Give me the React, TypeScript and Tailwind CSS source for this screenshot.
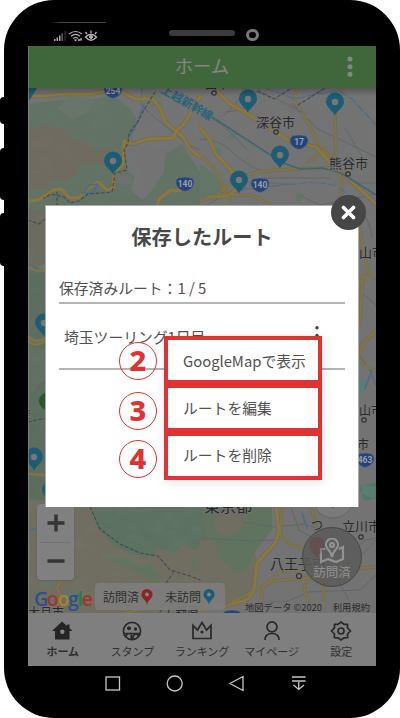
import React from "react";

const jp = "font-['Noto_Sans_CJK_JP',sans-serif]";

function Pin({ x, y }: { x: number; y: number }) {
  return (
    <g transform={`translate(${x} ${y})`}>
      <path d="M0 0C-1-5-9-8-9-14.500A9 9 0 0 1 9-14.500C9-8 1-5 0 0Z" fill="#1d5c72" />
      <circle cx="0" cy="-14" r="3.200" fill="#777" />
    </g>
  );
}

function Shield({ x, y, n }: { x: number; y: number; n: string }) {
  return (
    <g transform={`translate(${x} ${y})`}>
      <path d="M-7-6Q0-8 7-6Q10-3 9 0Q7 6 0 7.500Q-7 6-9 0Q-10-3-7-6Z" fill="#25457a" stroke="#6f7780" strokeWidth=".5" />
      <text x="0" y="2.800" textAnchor="middle" fontSize="8.500" fontWeight="700" fontFamily="Roboto, sans-serif" fill="#9a9fa8">{n}</text>
    </g>
  );
}

function City({ x, y, size = 13, children }: { x: number; y: number; size?: number; children: React.ReactNode }) {
  return (
    <text x={x} y={y} fontSize={size} fill="#292929" stroke="#777" strokeWidth="1.500" paintOrder="stroke" fontFamily="'Noto Sans CJK JP', sans-serif">
      {children}
    </text>
  );
}

const wideRoads = [
  "M28 95Q45 97 60 94L90 94Q106 90 120 91L135 99L153 99L161 110L166 123L176 131L183 137L190 149L200 157",
  "M200 97L184 124L176 131L174 138L148 139L133 144L124 141L123 165L114 173L113 188L107 190L98 182L89 188L78 198L70 198L61 189L53 190L46 195L38 200L28 201",
  "M155 209L160 198L171 190L180 191",
  "M200 128Q212 140 215 153Q222 160 230 169L240 187L228 196L208 197",
  "M218 92L230 104L248 114L266 126L290 141L316 147L333 166L351 181L376 204",
  "M297 88L294 100L307 121L316 140L332 160L336 158",
  "M335 108L336 164",
  "M344 88L339 92",
  "M218 194Q238 175 262 171Q290 169 320 168Q339 165 342 182L339 206",
  "M200 155Q220 170 223 190L230 200",
  "M200 201L221 195L250 195L270 204",
  "M339 160L322 151L308 162",
  "M28 267L36 271L46 270M28 336Q36 345 45 338M28 341Q36 349 46 340M28 474L46 475",
  "M359 227L364 252L369 274L376 282M369 274L359 283M363 275L361 301L360 325M376 330L368 337L359 348M359 359L365 366L376 371M376 332L364 342L360 355",
  "M276 507L279 530L276 542L257 563L254 590L248 599L226 606L200 610",
  "M282 507L280 535L290 544L309 550L326 566L341 570L376 567",
  "M261 602L263 586L281 571L310 570L334 566",
  "M311 507L316 524M226 606Q254 590 274 581L320 577M323 575L324 613M311 570L304 588L312 613",
  "M62 578L57 588L62 597L58 605M124 613L155 607L188 612",
];

function MapCanvas() {
  return (
    <svg className="absolute inset-0 h-full w-full" viewBox="28 88 348 525">
      <defs>
        <filter id="relief" x="0" y="0" width="100%" height="100%">
          <feTurbulence type="fractalNoise" baseFrequency=".055 .08" numOctaves="4" seed="8" />
          <feColorMatrix values="0 0 0 0 .18  0 0 0 0 .24  0 0 0 0 .18  1.400 0 0 0 -.58" />
        </filter>
        <linearGradient id="headShade" x1="0" x2="0" y1="0" y2="1">
          <stop stopColor="#000" stopOpacity=".25" /><stop offset="1" stopColor="#000" stopOpacity="0" />
        </linearGradient>
      </defs>
      <rect x="28" y="88" width="348" height="525" fill="#737374" />
      <path d="M28 104L60 100L95 99L112 95L128 106L137 119L130 139L123 151L125 170L135 176L131 190L142 200L152 190L164 172L166 152L145 146L168 153L182 144L200 172V210H28Z" fill="#627366" />
      <path d="M28 130L45 125L62 129L73 140L88 143L93 151L113 148L111 160L94 165L80 163L76 174L64 182L56 177L47 188L28 191Z" fill="#706b60" />
      <path d="M70 96L95 100L88 112L72 120L57 108ZM140 88L160 94L163 105L151 107Z" fill="#69746b" />
      <path d="M28 210H46V262L36 269L28 260Z" fill="#6b6b5f" />
      <path d="M28 262L46 272V507H28Z" fill="#5c6d60" />
      <path d="M28 346L46 350V378L28 396Z" fill="#626f63" />
      <path d="M28 500H200L218 507H268L253 545L258 568L250 592L224 606L199 604L195 613H28Z" fill="#706d61" />
      <path d="M90 507H204L213 521L206 540L195 550L184 545L174 553L158 549L151 557L130 554L110 542L98 528Z" fill="#5d7162" />
      <path d="M202 507H272V530L255 551L250 565L237 575L220 558L213 542L205 535ZM105 557L126 558L142 568L151 563L162 579L155 583L148 577L135 572ZM190 564L201 550L203 564L196 571Z" fill="#60735f" />
      <path d="M225 510L242 512L247 521L235 535L219 535L212 520ZM200 540L216 545L219 560L205 573L195 565Z" fill="#706d61" />
      <path d="M65 590L81 596L71 600L62 594ZM42 582L52 584L49 591ZM200 164L219 178L222 195L200 198ZM227 139L235 132L236 138ZM297 191L304 194L300 203L295 200ZM216 147L221 149L219 158Z" fill="#627666" />
      <path d="M114 174L132 176L130 184L120 185L115 179Z" fill="#6e7074" />
      <path d="M359 486L376 482V498L364 501Z" fill="#55756b" />
      <path d="M359 380L365 378L365 392L359 393ZM361 484L376 487L375 499L362 494Z" fill="#5b7e74" />
      <path d="M28 88H376V205H28Z" filter="url(#relief)" opacity=".14" />
      <path d="M28 205H200V613H28Z" filter="url(#relief)" opacity=".28" />
      <g fill="none" strokeLinejoin="round" strokeLinecap="round">
        <path d="M142 88L141 106L188 145L200 150M200 139Q220 140 230 150Q245 165 262 171M244 88L236 104L224 115M260 88L242 110L226 112M242 88Q295 100 316 128L376 157M345 128L361 155L368 164M200 113Q220 118 246 149M207 205L232 191L290 184M376 183H358L340 173L376 201M263 178H330M300 196L320 205L376 194M359 207Q370 220 372 238M359 290L376 305M359 354Q373 373 376 386M240 507L243 522L274 527L305 524L340 537L357 560L376 540M200 538L251 541L274 540M264 602H285L309 592L360 590L376 575M330 544L352 551L366 540L376 538M291 507L299 530L310 536M314 530L323 548M336 577L349 600" stroke="#62666b" strokeWidth="1" />
        {wideRoads.map((d, i) => <path key={i} d={d} stroke="#716d5c" strokeWidth={i < 5 || i === 14 ? 4.5 : 3.4} />)}
        {wideRoads.map((d, i) => <path key={i} d={d} stroke={i < 5 || i === 14 ? "#8b783d" : "#827544"} strokeWidth={i < 5 || i === 14 ? 2.8 : 1.9} />)}
        <path d="M266 88L295 99L322 93L339 91L352 99L376 125M292 104L302 112M326 88L307 99" stroke="#4c6d87" strokeWidth="1.300" strokeDasharray="8 3" />
        <path d="M212 117L255 145L283 163L300 169L322 168L341 173L376 195" stroke="#3f6771" strokeWidth="1.500" />
        <path d="M84 192L90 185L98 184L93 193L82 193M130 136L138 121L144 104M28 530L36 529M372 370L365 388M302 513L307 528" stroke="#506b8a" strokeWidth="1.700" />
        <path d="M241 191Q255 181 273 183T304 183T337 186M340 188L352 198" stroke="#566d84" strokeWidth="1.200" strokeDasharray="7 3" />
        <path d="M155 92L145 108L137 123L129 133L128 144L124 149L127 170L115 173L112 192L101 193L88 194L79 201L70 203L64 197L51 194L44 198M57 192V205M28 220L39 224L46 218M28 422L46 418M90 507L100 529L120 544L140 553L158 556L170 570L190 576L200 580M166 583L173 573M258 91L274 99L292 88M298 105L325 88M181 93L198 103M160 612L170 595" stroke="#454950" strokeWidth="1.100" strokeDasharray="3 2.500" />
      </g>
      <path d="M28 88H37L29 101Z" fill="#1d5c72" />
      <Shield x={113} y={91} n="254" /><Shield x={185} y={184} n="140" />
      <Shield x={299} y={142} n="17" /><Shield x={260} y={185} n="140" />
      <Shield x={365} y={460} n="463" /><Shield x={232} y={617} n="20" />
      <text transform="translate(160 92) rotate(30)" fontSize="11.500" fontWeight="700" fill="#286277" stroke="#777" strokeWidth=".8" paintOrder="stroke" fontFamily="'Noto Sans CJK JP', sans-serif">上越新幹線</text>
      <City x={205} y={89} size={12}>田市</City>
      <City x={256} y={127}>深谷市</City><City x={329} y={168}>熊谷市</City>
      <City x={359} y={257}>山市</City><City x={359} y={415} size={12}>山市</City>
      <City x={357} y={449} size={12}>市</City><City x={204} y={512} size={16}>東京都</City>
      <City x={342} y={531}>立川市</City><City x={311} y={530} size={12}>つ</City>
      <City x={270} y={569} size={14}>八王子市</City><City x={28} y={617} size={12}>大月市</City>
      <City x={163} y={616} size={12}>上野原</City><City x={20} y={418} size={11}>差</City>
      <g fill="#777" stroke="#303030" strokeWidth="1.200">
        <circle cx="214" cy="93" r="2.200" /><circle cx="276" cy="132" r="2.200" /><circle cx="348" cy="174" r="2.200" />
        <circle cx="364" cy="420" r="2.200" /><circle cx="361" cy="537" r="2.200" /><circle cx="299" cy="576" r="2.500" />
      </g>
      <Pin x={113} y={175} /><Pin x={248} y={113} /><Pin x={335} y={116} />
      <Pin x={280} y={169} /><Pin x={239} y={194} /><Pin x={44} y={337} />
      <Pin x={34} y={471} /><Pin x={51} y={504} />
      <circle cx="48" cy="401" r="9" fill="#28572b" /><path d="M45 403L48 397L51 403Z" fill="#909890" />
      <circle cx="333" cy="498" r="20" fill="#7a7a7a" stroke="#666" />
      <path d="M331 507H334" stroke="#444" />
      <rect x="28" y="88" width="348" height="8" fill="url(#headShade)" />
    </svg>
  );
}

function SmallPin({ color }: { color: string }) {
  return (
    <svg className="h-4 w-3 shrink-0" viewBox="0 0 12 16">
      <path d="M6 16C5 10 .5 10 .5 5.500A5.500 5.500 0 0 1 11.500 5.500C11.500 10 7 10 6 16Z" fill={color} />
      <circle cx="6" cy="5.500" r="1.900" fill="#858585" />
    </svg>
  );
}

function StatusBar() {
  return (
    <div className="relative h-[46px] w-full">
      <div className="absolute left-[20px] top-[22px] h-px w-[58px] bg-linear-to-r from-black via-[#444] via-20% to-[#444]" />
      <svg className="absolute left-[25px] top-[29px] h-[13px] w-[46px]" viewBox="53 29 46 13" fill="none" stroke="#b5b5b5">
        <g fill="#aaa" stroke="none">
          <rect x="54" y="39" width="1.500" height="2" /><rect x="56.500" y="37.500" width="1.500" height="3.500" />
          <rect x="59" y="35.500" width="1.500" height="5.500" /><rect x="61.500" y="33.500" width="1.200" height="7.500" fill="#777" /><rect x="64.500" y="31" width="1.200" height="10" fill="#333" />
        </g>
        <path d="M69 34Q75.500 29 82 34M71 36.200Q75.500 32.700 80 36.200M73 38.500Q75.500 36.500 78 38.500M74.500 39.500L75.500 40.500L76.500 39.500M78 40H82M79 39V41M81 38V40" strokeWidth="1.200" />
        <path d="M85.500 37Q91 31.500 96.500 37Q91 43.500 85.500 37ZM91 33V30.500M87 34L85.500 32M95 34L96.500 32" strokeWidth="1.300" />
        <circle cx="91" cy="37" r="1.500" fill="#b5b5b5" />
      </svg>
      <div className="absolute left-[141px] top-[30px] h-[6px] w-[66px] rounded-full bg-[#3b3b3b]" />
      <div className="absolute left-[218px] top-[28.500px] size-[12.500px] rounded-full border-[3.500px] border-[#777]" />
    </div>
  );
}

function NavIcon({ index }: { index: number }) {
  return (
    <svg className="h-5 w-6" viewBox="0 0 24 20" fill="none" stroke="#292929" strokeWidth="1.700">
      {index === 0 && <><path d="M11 .5L1 10H4V18.500H18.500V10H21.500L18.500 7V3.500H16V5Z" fill="#242424" stroke="none" /><circle cx="11.300" cy="10.800" r="2.200" fill="#858585" stroke="none" /></>}
      {index === 1 && <><circle cx="12" cy="10" r="8.600" /><circle cx="9" cy="7.300" r="2" fill="#292929" stroke="none" /><circle cx="15.500" cy="8" r="1.700" fill="#292929" stroke="none" /><path d="M4 12.500H20M6 15.500Q7 11.500 11.300 12.600V18M13 18Q12.500 14 16 12.800Q18 13 18 15" /></>}
      {index === 2 && <><path d="M3 4.300L7.500 9L12 1.500L16.500 9L21 4.300V17.500H3Z" /><circle cx="12" cy="11" r="1.600" fill="#292929" stroke="none" /></>}
      {index === 3 && <><circle cx="12" cy="5.900" r="5" /><path d="M5 19Q5 12.500 12 12.500T19 19" /></>}
      {index === 4 && <><path d="M12 1L15 3.300L18.500 3.300V6.800L21.500 10L18.500 13L18.700 16.700L15 16.800L12 19L9 16.800L5.300 16.700L5.500 13L2.500 10L5.500 6.800V3.300H9Z" strokeLinejoin="round" /><circle cx="12" cy="10" r="3" /></>}
    </svg>
  );
}

const dialogText = "whitespace-nowrap text-[14.800px] leading-[22px] text-[#515151]";

function Annotation({ n, top }: { n: string; top: string }) {
  return (
    <div className={`absolute left-[73px] ${top} flex size-[38px] items-center justify-center rounded-full border border-[#e03232] pb-[3px] font-['Noto_Sans',sans-serif] text-[29px] font-extrabold leading-none text-[#e03232]`}>
      {n}
    </div>
  );
}

function RouteDialog() {
  const actions = ["GoogleMapで表示", "ルートを編集", "ルートを削除"];
  const padding = ["pt-[2px]", "pb-0", "pb-[2px]"];
  return (
    <section className="absolute left-[17px] top-[159px] h-[302px] w-[314px] border-x border-t border-[#aaa] bg-white px-[13px]">
      <h2 className="pt-[16px] text-center text-[20.200px] font-bold leading-[30px] text-[#484848]">保存したルート</h2>
      <div className={`mt-[24px] h-[28px] border-b-2 border-[#b4b4b4] pt-px ${dialogText}`}>保存済みルート：1 / 5</div>
      <div className={`flex h-[66px] items-start justify-between border-b-2 border-[#b4b4b4] pl-[5px] pr-[26px] pt-[22px] ${dialogText}`}>
        <span>埼玉ツーリング1日目</span>
        <svg className="h-[17px] w-[4px]" viewBox="0 0 4 17" fill="#444"><circle cx="2" cy="1.700" r="1.700" /><circle cx="2" cy="9.500" r="1.700" /></svg>
      </div>
      <button aria-label="閉じる" className="absolute left-[285px] top-[-11px] flex size-[35px] items-center justify-center rounded-full bg-[#464646]">
        <svg className="size-[15px]" viewBox="0 0 15 15" stroke="white" strokeWidth="3.600" strokeLinecap="round"><path d="M2.500 2.500L12.500 12.500M12.500 2.500L2.500 12.500" /></svg>
      </button>
      <div className="absolute left-[118px] top-[130px] w-[158px] bg-white shadow-[1px_2px_10px_rgba(0,0,0,.12)]">
        {actions.map((label, i) => (
          <div key={label} className={`flex h-[48px] items-center border-4 border-[#e03232] pl-[15px] ${padding[i]} ${dialogText}`}>{label}</div>
        ))}
      </div>
      <Annotation n="2" top="top-[136px]" />
      <Annotation n="3" top="top-[186px]" />
      <Annotation n="4" top="top-[234px]" />
    </section>
  );
}

export default function App() {
  return (
    <main className={`relative h-[718px] w-[400px] overflow-hidden bg-white ${jp}`}>
      <div className="absolute left-0 top-[97px] h-[27px] w-2 rounded-l bg-black" />
      <div className="absolute left-0 top-[148px] h-[52px] w-2 rounded-l bg-black" />
      <div className="absolute left-0 top-[213px] h-[53px] w-2 rounded-l bg-black" />
      <div className="relative ml-[4px] flex h-[718px] w-[396px] flex-col rounded-[50px] bg-black px-[24px]">
        <StatusBar />
        <div className="relative flex h-[620px] w-[348px] flex-col">
          <header className="relative flex h-[42px] shrink-0 items-center justify-center bg-[#40673b] pb-[3px] text-[18.300px] text-[#858585]">
            ホーム
            <svg className="absolute left-[319px] top-[10px] h-[22px] w-[6px]" viewBox="0 0 6 22" fill="#858585"><circle cx="3" cy="3" r="2.500" /><circle cx="3" cy="10.700" r="2.500" /><circle cx="3" cy="18.300" r="2.500" /></svg>
          </header>
          <div className="relative h-[525px] shrink-0 overflow-hidden">
            <MapCanvas />
            <div className="absolute left-[9px] top-[416px] flex h-[76px] w-[37px] flex-col rounded-sm bg-[#808080] px-1 shadow-sm">
              <div className="flex flex-1 items-center justify-center border-b border-[#727272]">
                <svg className="size-[18px]" viewBox="0 0 18 18" stroke="#353535" strokeWidth="3.500"><path d="M0.500 9H17.500M9 .5V17.500" /></svg>
              </div>
              <div className="flex flex-1 items-center justify-center">
                <svg className="size-[18px]" viewBox="0 0 18 18" stroke="#353535" strokeWidth="3.500"><path d="M.5 9H17.500" /></svg>
              </div>
            </div>
            <div className="absolute left-[6px] top-[497px] font-['Open_Sans',sans-serif] text-[19.500px] font-semibold leading-[28px] tracking-[-1.300px]">
              <span className="text-[#2b4f91]">G</span><span className="text-[#a23430]">o</span><span className="text-[#a58622]">o</span><span className="text-[#2b4f91]">g</span><span className="text-[#297d41]">l</span><span className="text-[#a23430]">e</span>
            </div>
            <div className="absolute left-[67px] top-[495px] flex h-[27px] w-[130px] items-center rounded bg-[#7c7c7b]/95 pl-[8px] text-[12px] text-[#303030]">
              <span className="w-[38px]">訪問済</span><SmallPin color="#8c2425" /><span className="ml-[12px] w-[38px]">未訪問</span><SmallPin color="#1d5c72" />
            </div>
            <div className="absolute bottom-0 right-0 flex h-[11px] w-[134px] items-center justify-between whitespace-nowrap bg-[#737373]/80 pl-[3px] pr-[6px] text-[9.300px] leading-[11px] text-[#292929]">
              <span>地図データ ©2020</span><span>利用規約</span>
            </div>
            <div className="absolute left-[274px] top-[439px] flex size-[60px] flex-col items-center rounded-full border border-[#484848] bg-[#5b5b5b]/85 pt-[10px] text-[12.500px] leading-[16px] text-[#929292]">
              <svg className="relative h-[26px] w-[26px]" viewBox="0 0 26 26" fill="none" stroke="#929292" strokeWidth="2.200"><path d="M6 11H2V24L9 21L17 24L24 21V9L20 11M13 19Q12 14 8 10A6 6 0 1 1 18 10Q14 14 13 19Z" /><circle cx="13" cy="7" r="2" /></svg>
              <span>訪問済</span>
            </div>
            <svg className="absolute left-[280px] top-[448px] h-[28px] w-[18px]" viewBox="0 0 18 28" fill="#752c2e" fillOpacity=".25"><path d="M9 24C8 17 1 15 1 9A8 8 0 0 1 17 9C17 15 10 17 9 24Z" /></svg>
          </div>
          <nav className="grid h-[53px] shrink-0 grid-cols-5 bg-[#7f7f7f] text-[11px] leading-[15px] text-[#303030]">
            {["ホーム", "スタンプ", "ランキング", "マイページ", "設定"].map((label, i) => (
              <div key={label} className={`flex flex-col items-center pt-[8px] ${i === 0 ? "font-bold" : ""}`}>
                <NavIcon index={i} /><span className="mt-[3px] whitespace-nowrap">{label}</span>
              </div>
            ))}
          </nav>
          <RouteDialog />
        </div>
        <div className="flex h-[52px] items-start pl-[77px] pt-[9px]">
          <svg className="h-[18px] w-[202px]" viewBox="105 675 202 18" fill="none" stroke="#c5c5c5" strokeWidth="1.300">
            <rect x="106" y="677" width="13.500" height="13" /><circle cx="174.700" cy="683.500" r="7.500" />
            <path d="M243 676.500V690.500L230 683.500ZM292 677H305.500M292 681H305.500M298.700 682V689M293.500 685L298.700 689.500L304 685" />
          </svg>
        </div>
      </div>
      <div className="absolute left-[28px] top-[46px] h-[620px] w-px bg-[#829082]/60" />
    </main>
  );
}
